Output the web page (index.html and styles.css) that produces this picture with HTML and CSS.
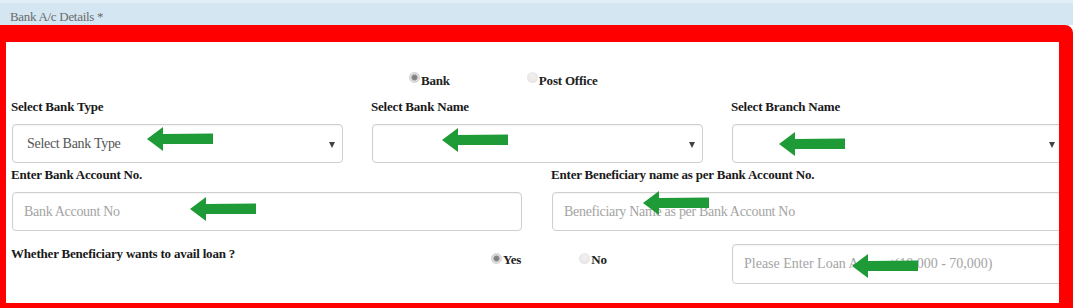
FILE: index.html
```html
<!DOCTYPE html>
<html>
<head>
<meta charset="utf-8">
<link rel="stylesheet" href="styles.css">
</head>
<body>
<div class="section-head"><span class="section-title">Bank A/c Details *</span></div>
<div class="frame">
  <div class="radio-row">
    <label class="radio"><span class="dot checked"></span><span class="radio-text">Bank</span></label>
    <label class="radio"><span class="dot"></span><span class="radio-text">Post Office</span></label>
  </div>

  <div class="grid3">
    <div class="field">
      <div class="lbl">Select Bank Type</div>
      <div class="select"><span class="sel-text">Select Bank Type</span><span class="caret"></span></div>
    </div>
    <div class="field">
      <div class="lbl">Select Bank Name</div>
      <div class="select"><span class="sel-text"></span><span class="caret"></span></div>
    </div>
    <div class="field">
      <div class="lbl">Select Branch Name</div>
      <div class="select"><span class="sel-text"></span><span class="caret"></span></div>
    </div>
  </div>

  <div class="grid2">
    <div class="field">
      <div class="lbl lbl-tight">Enter Bank Account No.</div>
      <input class="input" type="text" placeholder="Bank Account No">
    </div>
    <div class="field">
      <div class="lbl lbl-tight">Enter Beneficiary name as per Bank Account No.</div>
      <input class="input" type="text" placeholder="Beneficiary Name as per Bank Account No">
    </div>
  </div>

  <div class="grid3 row3">
    <div class="lbl loan-q">Whether Beneficiary wants to avail loan ?</div>
    <div class="loan-radios">
      <label class="radio"><span class="dot checked"></span><span class="radio-text">Yes</span></label>
      <label class="radio"><span class="dot"></span><span class="radio-text">No</span></label>
    </div>
    <input class="input loan-input" type="text" placeholder="Please Enter Loan Amount(10,000 - 70,000)">
  </div>

  <svg class="arrow a1" viewBox="0 0 66 24" width="66" height="24"><polygon points="0,12 16,0 16,7 66,6.5 66,17 16,17 16,24"/></svg>
  <svg class="arrow a2" viewBox="0 0 66 24" width="66" height="24"><polygon points="0,12 16,0 16,7 66,6.5 66,17 16,17 16,24"/></svg>
  <svg class="arrow a3" viewBox="0 0 66 24" width="66" height="24"><polygon points="0,12 16,0 16,7 66,6.5 66,17 16,17 16,24"/></svg>
  <svg class="arrow a4" viewBox="0 0 66 24" width="66" height="24"><polygon points="0,12 16,0 16,7 66,6.5 66,17 16,17 16,24"/></svg>
  <svg class="arrow a5" viewBox="0 0 66 24" width="66" height="24"><polygon points="0,12 16,0 16,7 66,6.5 66,17 16,17 16,24"/></svg>
  <svg class="arrow a6" viewBox="0 0 66 24" width="66" height="24"><polygon points="0,12 16,0 16,7 66,6.5 66,17 16,17 16,24"/></svg>
</div>
</body>
</html>
```
FILE: styles.css
```css
html, body {
  margin: 0;
  padding: 0;
  background: #ffffff;
  overflow: hidden;
}
body {
  width: 1073px;
  height: 308px;
  font-family: "Liberation Serif", "Times New Roman", serif;
  color: #222;
}
.section-head {
  height: 25px;
  background: #d4e6f2;
  border-top: 3px solid #e2eef7;
  box-sizing: border-box;
  padding: 7px 0 0 10px;
}
.section-title {
  display: block;
  font-size: 13px;
  line-height: 14px;
  color: #6a6a6a;
  letter-spacing: -0.3px;
}
.frame {
  position: relative;
  box-sizing: border-box;
  height: 283px;
  border-style: solid;
  border-color: #ff0000;
  border-width: 17px 14px 5px 6px;
  border-top-right-radius: 8px;
  background: #ffffff;
  overflow: hidden;
  padding: 28px 0 0 6px;
}
.radio-row {
  display: flex;
  height: 16px;
  margin-left: 397px;
  gap: 77px;
}
.radio {
  display: flex;
  align-items: flex-start;
  font-size: 13px;
  font-weight: bold;
  line-height: 16px;
  color: #222;
  letter-spacing: -0.2px;
}
.dot {
  display: block;
  width: 11px;
  height: 11px;
  border-radius: 50%;
  background: radial-gradient(circle at 50% 40%, #f2f2f2 0%, #e0e0e0 100%);
  box-sizing: border-box;
  margin-top: 2px;
  margin-right: 1px;
}
.dot.checked {
  background: radial-gradient(circle, #7a7a7a 0, #8a8a8a 2.5px, #dcdcdc 3.5px, #e6e6e6 100%);
  border: 1px solid #d0d0d0;
}
.radio-text {
  margin-top: 3px;
}
.grid3 {
  display: grid;
  grid-template-columns: 331px 331px 331px;
  column-gap: 29px;
}
.grid2 {
  display: grid;
  grid-template-columns: 510px 510px;
  column-gap: 30px;
}
.field {
  display: flex;
  flex-direction: column;
}
.lbl {
  font-size: 13px;
  font-weight: bold;
  line-height: 16px;
  color: #1a1a1a;
  letter-spacing: -0.2px;
  margin: 13px 0 9px -1px;
  white-space: nowrap;
}
.lbl-tight {
  margin-top: 4px;
}
.select {
  box-sizing: border-box;
  height: 39px;
  border: 1px solid #cfcfcf;
  border-radius: 4px;
  display: flex;
  align-items: center;
  padding: 0 7px 0 14px;
  box-shadow: inset 0 1px 1px rgba(0,0,0,0.05);
}
.sel-text {
  flex: 1;
  font-size: 14px;
  color: #555;
  letter-spacing: -0.3px;
}
.caret {
  width: 0;
  height: 0;
  border-left: 3px solid transparent;
  border-right: 3px solid transparent;
  border-top: 6px solid #444;
  margin-top: 2px;
}
.input {
  box-sizing: border-box;
  height: 39px;
  width: 100%;
  border: 1px solid #cfcfcf;
  border-radius: 4px;
  padding: 0 11px;
  font-family: "Liberation Serif", "Times New Roman", serif;
  font-size: 14px;
  color: #555;
  letter-spacing: -0.3px;
  box-shadow: inset 0 1px 1px rgba(0,0,0,0.05);
  outline: none;
  background: #fff;
}
.input::placeholder {
  color: #a4a4a4;
}
.row3 {
  margin-top: 13px;
  align-items: start;
}
.row3 .input {
  height: 40px;
}
.loan-input {
  letter-spacing: 0;
}
.loan-q {
  margin: 2px 0 0 -1px;
}
.loan-radios {
  display: flex;
  padding: 7px 0 0 119px;
  gap: 58px;
}
.loan-radios .radio-text {
  margin-top: 1px;
}
.arrow {
  position: absolute;
  fill: #1e9a37;
}
.a1 { left: 141px; top: 85px; }
.a2 { left: 436px; top: 86px; }
.a3 { left: 773px; top: 90px; }
.a4 { left: 184px; top: 155px; }
.a5 { left: 637px; top: 149px; }
.a6 { left: 846px; top: 212px; }
```
